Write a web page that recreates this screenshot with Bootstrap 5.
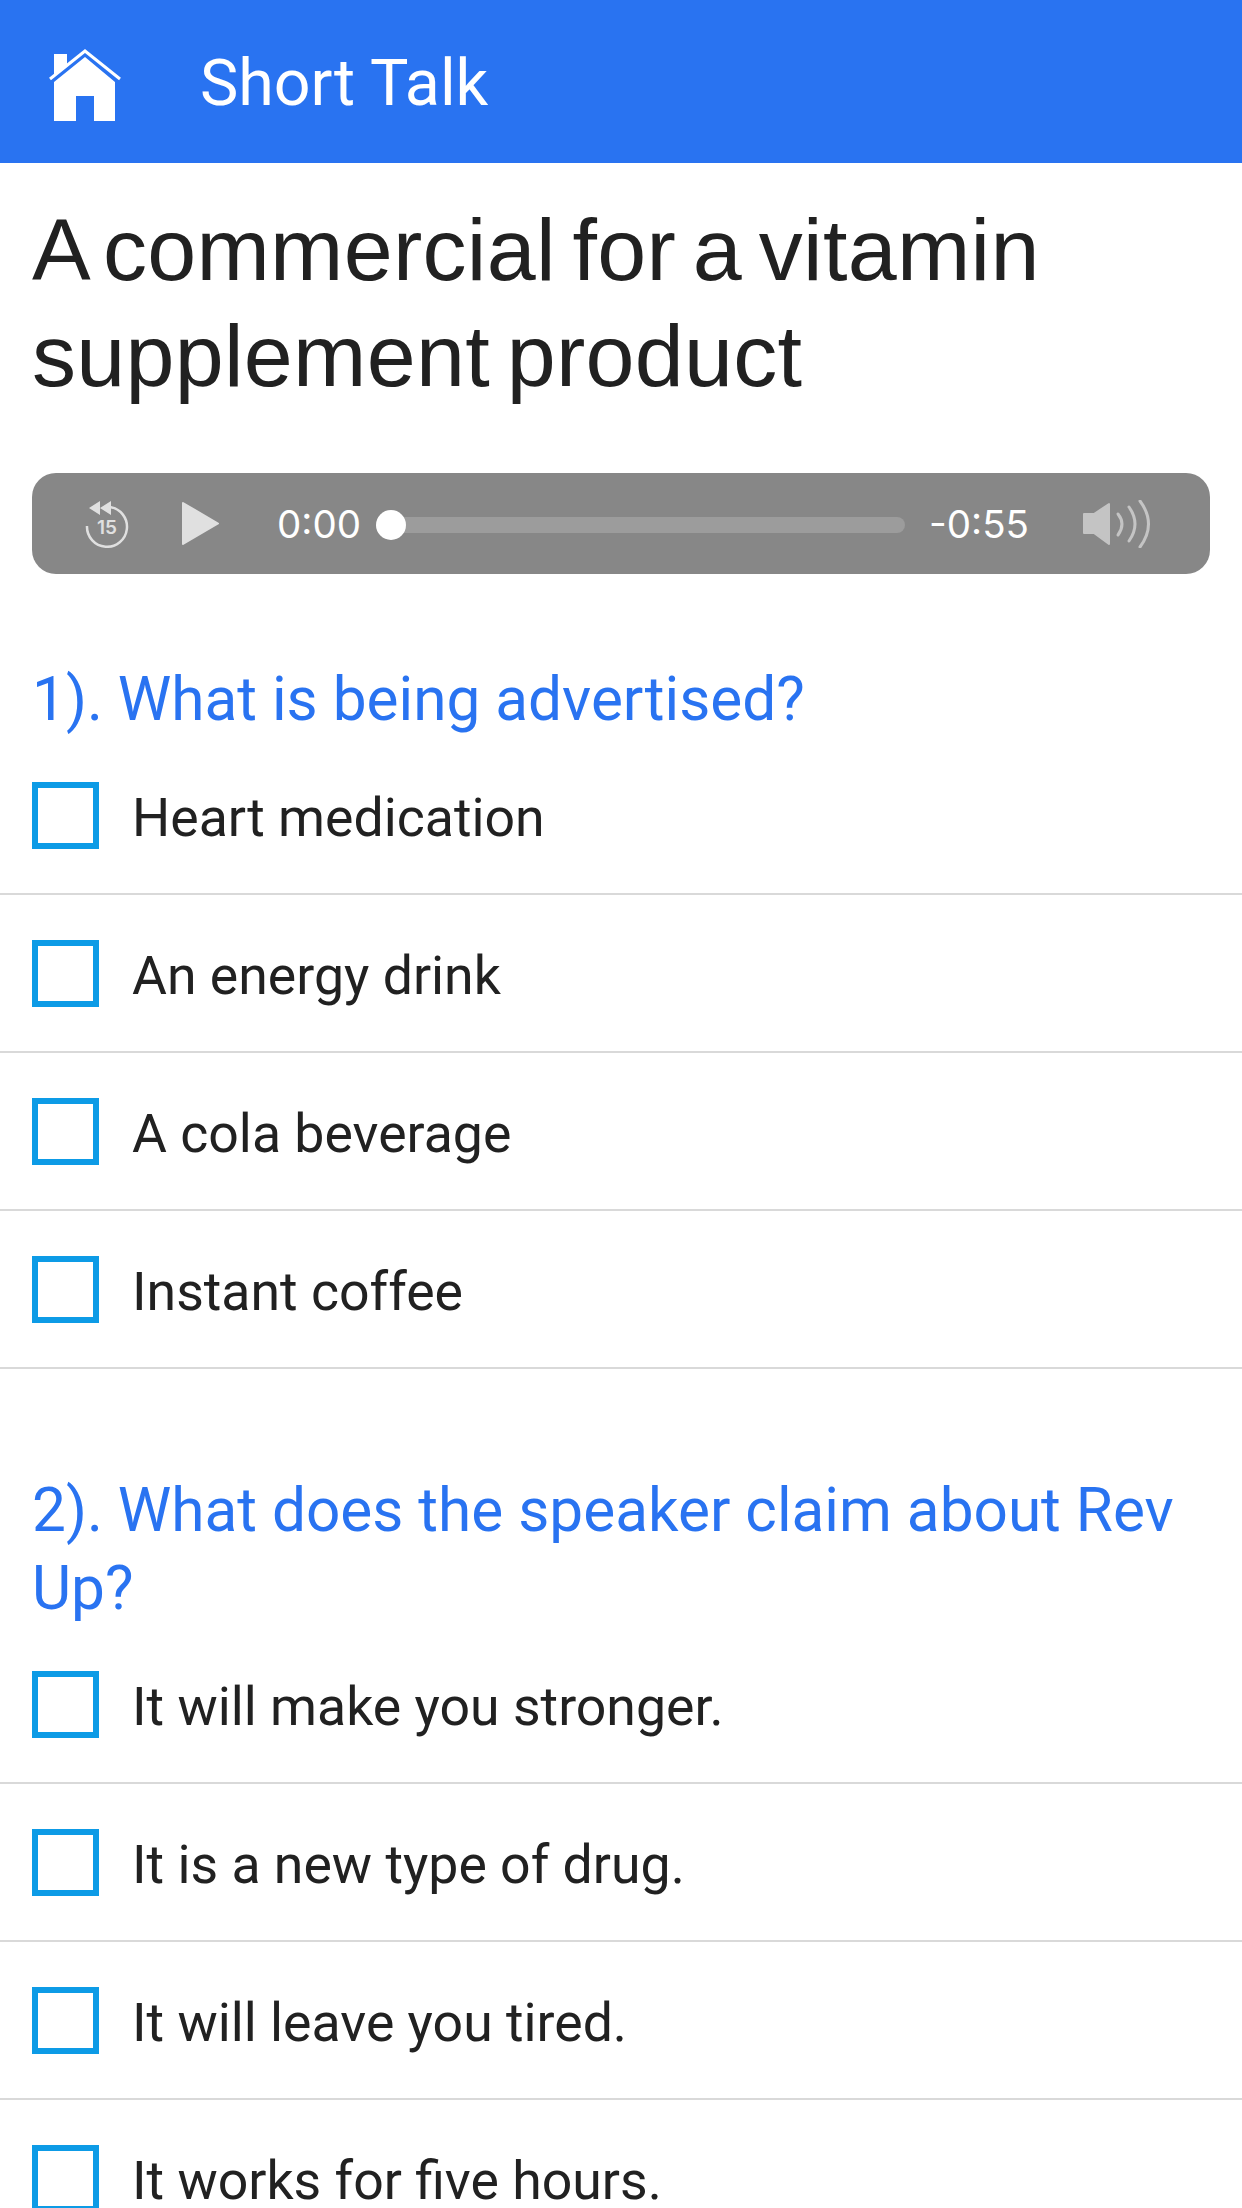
<!DOCTYPE html>
<html lang="en">
<head>
    <meta charset="UTF-8">
    <meta name="viewport" content="width=device-width, initial-scale=1.0">
    <title>Short Talk</title>
    <link rel="stylesheet" href="https://cdn.jsdelivr.net/npm/bootstrap@5.3.0/dist/css/bootstrap.min.css">
    <style>
        html, body {
            height: 2208px;
            overflow: hidden;
        }
        body {
            font-family: Roboto, "Liberation Sans", sans-serif;
            color: #212121;
        }
        .top-bar {
            height: 163px;
            background-color: #2973f1;
            padding-left: 49px;
            gap: 79px;
        }
        .home-icon {
            margin-top: 7px;
        }
        .top-title {
            font-size: 64.500px;
            color: #fff;
            line-height: 1;
            padding-top: 4px;
        }
        .talk-title {
            font-family: "Liberation Sans", Arial, sans-serif;
            font-size: 88px;
            font-weight: 400;
            line-height: 106px;
            letter-spacing: 0.300px;
            word-spacing: -8px;
            margin: 34px 32px 0;
        }
        .player {
            height: 101px;
            margin: 64px 32px 0;
            background-color: #878787;
            border-radius: 24px;
            padding: 0 59px 0 53px;
            color: #fff;
            font-family: Inter, "Liberation Sans", sans-serif;
            font-size: 38.500px;
        }
        .play-icon {
            margin-left: 53px;
        }
        .time-now {
            margin-left: 58px;
        }
        .player-time {
            padding-top: 2px;
        }
        .track {
            height: 16px;
            background-color: #9c9c9c;
            border-radius: 8px;
            margin: 2px 24px 0 15px;
            position: relative;
        }
        .knob {
            position: absolute;
            left: 0;
            top: -7px;
            width: 30px;
            height: 30px;
            border-radius: 50%;
            background-color: #fff;
        }
        .volume-icon {
            margin-left: 54px;
        }
        .question {
            color: #2973f1;
            font-size: 60.300px;
            line-height: 78px;
            font-weight: 400;
            margin: 87px 0 -2px;
            padding: 0 32px;
        }
        .question-next {
            margin-top: 103px;
        }
        .answer {
            height: 158px;
            border-bottom: 2px solid #d9d9d9;
            padding-left: 32px;
            gap: 33px;
            font-size: 53.600px;
        }
        .answer-text {
            padding-top: 6px;
        }
        .tick {
            width: 67px;
            height: 67px;
            border: 6px solid #0d9be6;
            flex-shrink: 0;
        }
    </style>
</head>
<body>
    <!-- Header -->
    <div class="top-bar d-flex align-items-center">
        <svg class="home-icon" width="72" height="72" viewBox="0 0 72 72">
            <path fill="#fff" d="M5 5 H18 V16 L5 26Z"/>
            <path fill="none" stroke="#fff" stroke-width="3" d="M1 30 L36 2 L71 30"/>
            <path fill="#fff" d="M36 8 L66 33 V72 H45 V47 H27 V72 H5 V33Z"/>
        </svg>
        <div class="top-title">Short Talk</div>
    </div>

    <h1 class="talk-title">A commercial for a vitamin supplement product</h1>

    <!-- Player -->
    <div class="player d-flex align-items-center">
        <svg width="44" height="48" viewBox="0 0 44 48" class="flex-shrink-0">
            <path fill="#e0e0e0" d="M4 8 L15 1 V15Z M15 8 L26 1 V15Z"/>
            <path fill="none" stroke="#e0e0e0" stroke-width="2.500" d="M25 7 A20 20 0 1 1 2 26"/>
            <text x="22" y="34" text-anchor="middle" font-family="Inter, sans-serif" font-size="19" font-weight="600" fill="#e0e0e0">15</text>
        </svg>
        <svg width="37" height="43" viewBox="0 0 37 43" class="play-icon flex-shrink-0">
            <path fill="#e0e0e0" stroke="#e0e0e0" stroke-width="2" stroke-linejoin="round" d="M1 1 L36 21.500 L1 42Z"/>
        </svg>
        <span class="time-now player-time">0:00</span>
        <div class="track flex-grow-1"><div class="knob"></div></div>
        <span class="player-time">-0:55</span>
        <svg width="68" height="48" viewBox="0 0 68 48" class="volume-icon flex-shrink-0">
            <path fill="#c4c4c4" stroke="#c4c4c4" stroke-width="2" stroke-linejoin="round" d="M1 14 H11 L26 4 V44 L11 33 H1Z"/>
            <g fill="none" stroke="#c4c4c4" stroke-width="3" stroke-linecap="round">
                <path d="M35 14 Q43 24 35 35"/>
                <path d="M46 7 Q58 24 46 41"/>
                <path d="M57 1 Q74 24 57 47"/>
            </g>
        </svg>
    </div>

    <!-- Question 1 -->
    <h2 class="question">1). What is being advertised?</h2>
    <div class="answer d-flex align-items-center"><span class="tick"></span><span class="answer-text">Heart medication</span></div>
    <div class="answer d-flex align-items-center"><span class="tick"></span><span class="answer-text">An energy drink</span></div>
    <div class="answer d-flex align-items-center"><span class="tick"></span><span class="answer-text">A cola beverage</span></div>
    <div class="answer d-flex align-items-center"><span class="tick"></span><span class="answer-text">Instant coffee</span></div>

    <!-- Question 2 -->
    <h2 class="question question-next">2). What does the speaker claim about Rev Up?</h2>
    <div class="answer d-flex align-items-center"><span class="tick"></span><span class="answer-text">It will make you stronger.</span></div>
    <div class="answer d-flex align-items-center"><span class="tick"></span><span class="answer-text">It is a new type of drug.</span></div>
    <div class="answer d-flex align-items-center"><span class="tick"></span><span class="answer-text">It will leave you tired.</span></div>
    <div class="answer d-flex align-items-center"><span class="tick"></span><span class="answer-text">It works for five hours.</span></div>

    <script src="https://cdn.jsdelivr.net/npm/bootstrap@5.3.0/dist/js/bootstrap.bundle.min.js"></script>
</body>
</html>
